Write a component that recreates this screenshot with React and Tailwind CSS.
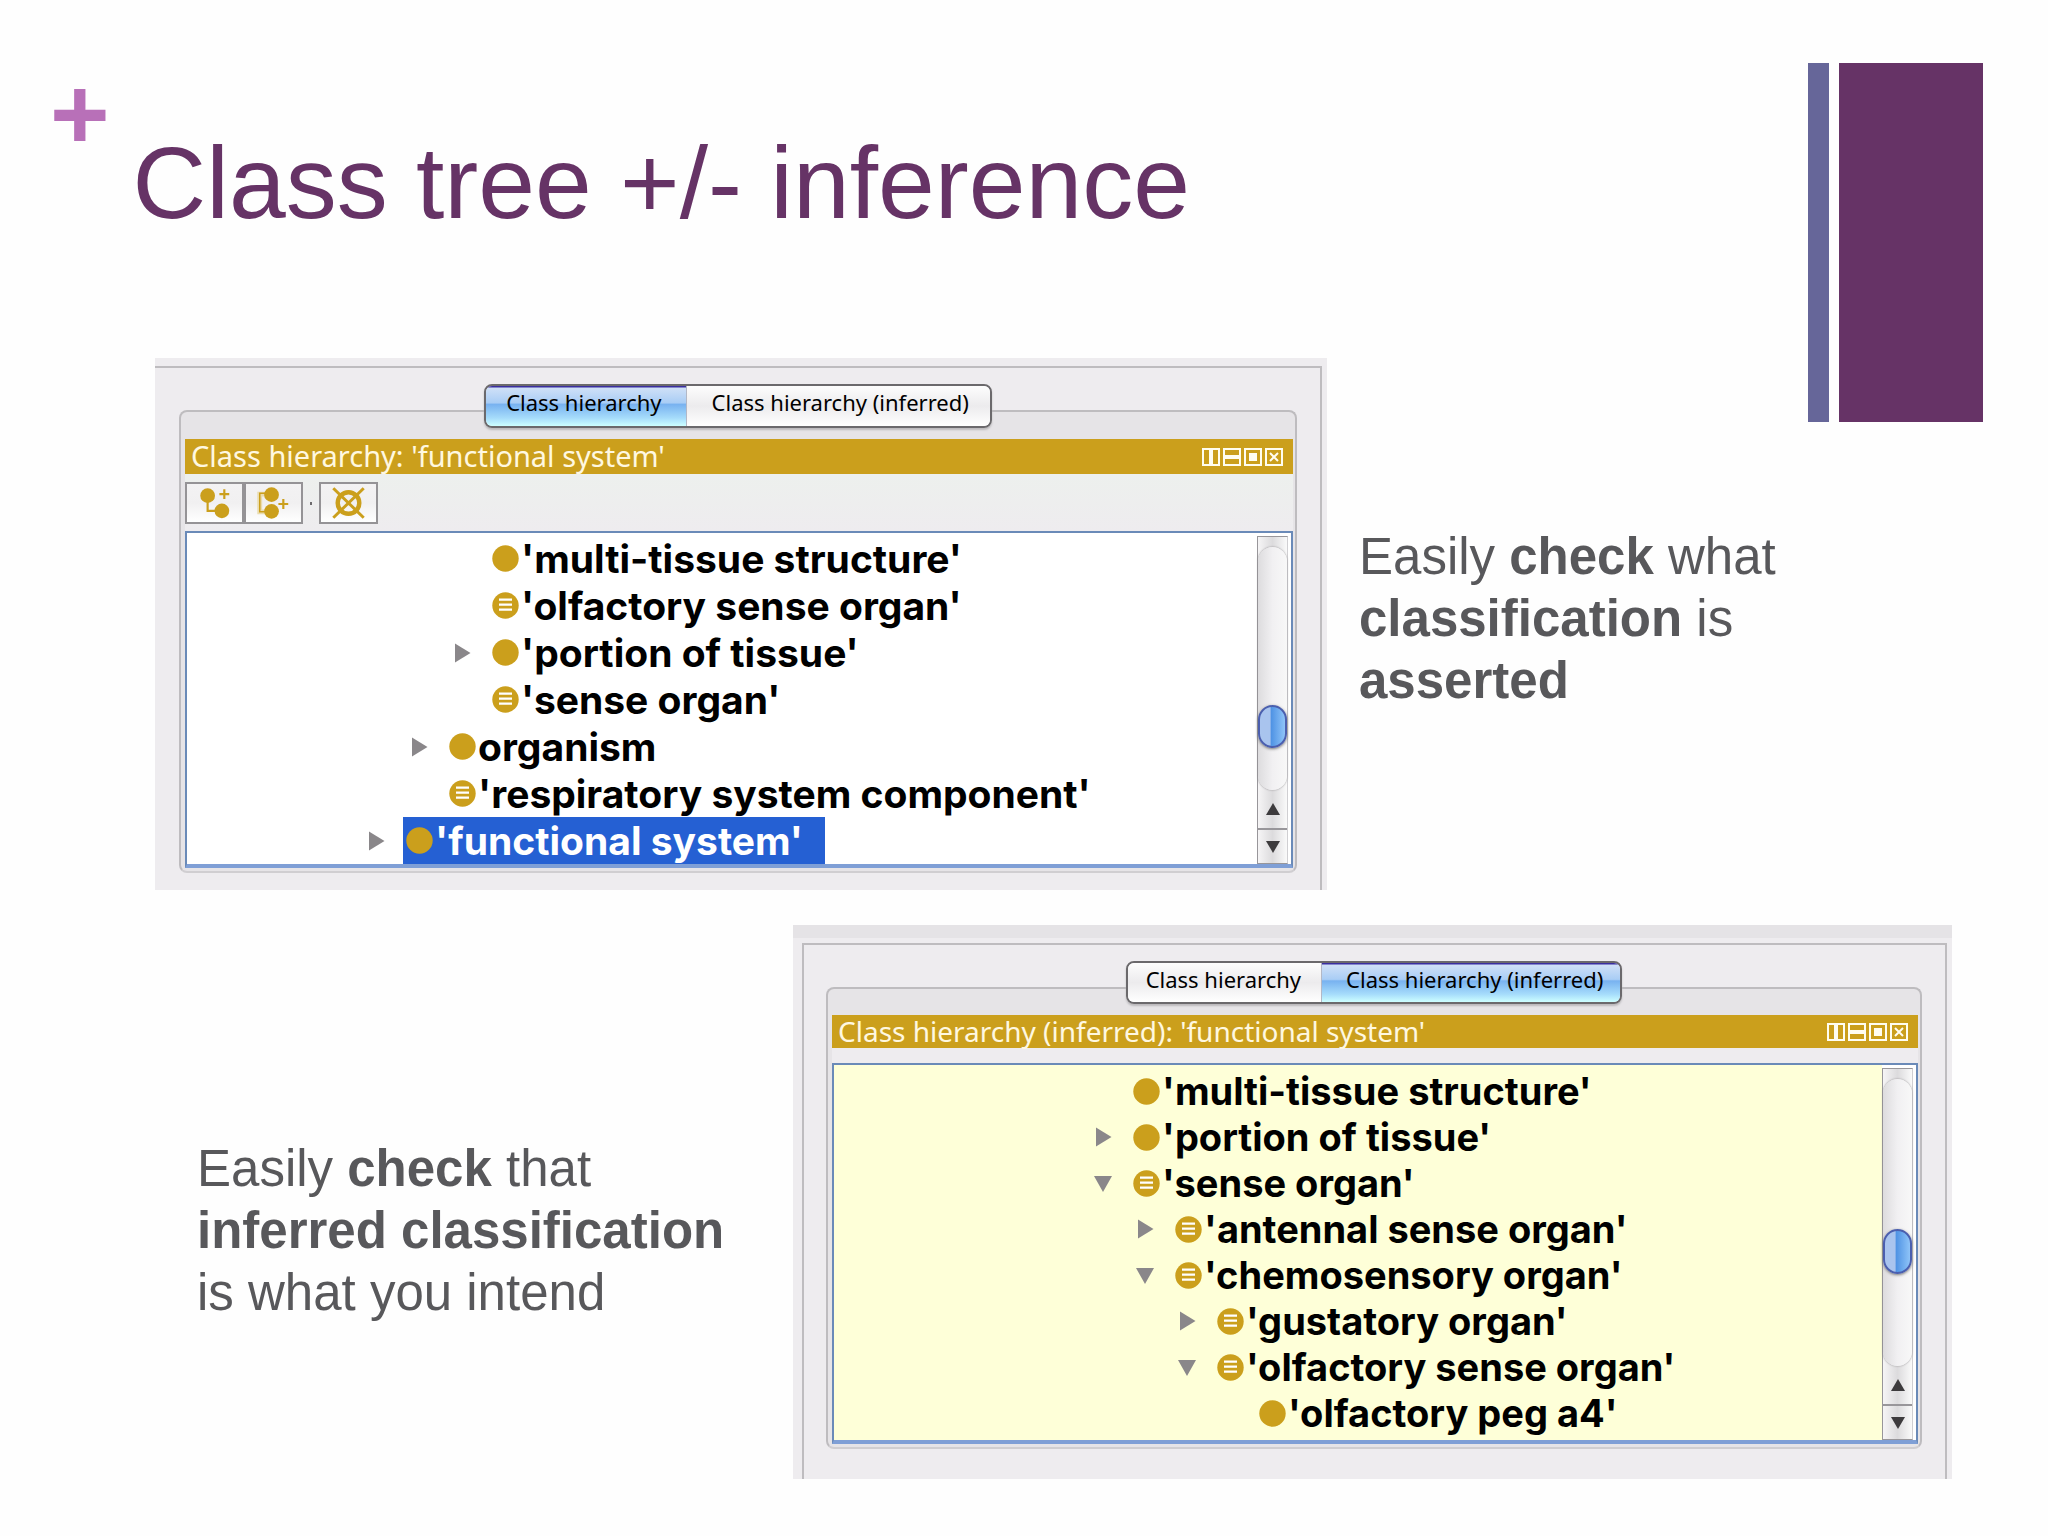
import { useState } from 'react';
import clsx from 'clsx';

const GOLD = '#cb9f1c';

const ASSERTED = [
  { name: "'multi-tissue structure'", level: 2 },
  { name: "'olfactory sense organ'", level: 2, defined: true },
  { name: "'portion of tissue'", level: 2, toggle: 'closed' },
  { name: "'sense organ'", level: 2, defined: true },
  { name: 'organism', level: 1, toggle: 'closed' },
  { name: "'respiratory system component'", level: 1, defined: true },
  { name: "'functional system'", level: 0, toggle: 'closed', selected: true },
];

const INFERRED = [
  { name: "'multi-tissue structure'", level: 0 },
  { name: "'portion of tissue'", level: 0, toggle: 'closed' },
  { name: "'sense organ'", level: 0, defined: true, toggle: 'open' },
  { name: "'antennal sense organ'", level: 1, defined: true, toggle: 'closed' },
  { name: "'chemosensory organ'", level: 1, defined: true, toggle: 'open' },
  { name: "'gustatory organ'", level: 2, defined: true, toggle: 'closed' },
  { name: "'olfactory sense organ'", level: 2, defined: true, toggle: 'open' },
  { name: "'olfactory peg a4'", level: 3 },
];

const ASSERTED_INDENT = ['pl-[179px]', 'pl-[222px]', 'pl-[265px]'];
const INFERRED_INDENT = ['pl-[259px]', 'pl-[301px]', 'pl-[343px]', 'pl-[385px]'];

function ClassIcon({ defined }) {
  return (
    <svg className="w-[27px] h-[27px] shrink-0" viewBox="0 0 27 27" aria-hidden="true">
      <circle cx="13.5" cy="13.5" r="13.2" fill={GOLD} />
      {defined && <path d="M7 7.7h13M7 12.7h13M7 17.7h13" stroke="#fff" strokeWidth="2.2" />}
    </svg>
  );
}

function Toggle({ state }) {
  if (!state) return <span className="w-5 shrink-0" />;
  return (
    <button className="w-5 h-5 shrink-0" aria-label={state === 'open' ? 'Collapse' : 'Expand'}>
      <svg viewBox="0 0 20 20" className="w-5 h-5" fill="#8a878a">
        {state === 'open' ? <path d="M1 3h18l-9 16z" /> : <path d="M3 0.5v19L18.5 10z" />}
      </svg>
    </button>
  );
}

function TreeRow({ item, indent, compact }) {
  return (
    <li
      className={clsx(
        "flex items-center font-['Inter','Noto_Sans',sans-serif]",
        compact ? 'h-[46px] text-[38px]' : 'h-[47px] text-[39px]',
        indent,
      )}
    >
      <Toggle state={item.toggle} />
      <span
        className={clsx(
          'flex items-center gap-[2px] h-full ml-[17px] pl-[3px] pr-[22px] leading-none whitespace-nowrap font-bold',
          item.selected ? 'bg-[#2560d3] text-white' : 'text-black',
        )}
      >
        <ClassIcon defined={item.defined} />
        {item.name}
      </span>
    </li>
  );
}

function ScrollBar({ before, after }) {
  return (
    <div className="w-[31px] shrink-0 flex flex-col border border-[#98969a] border-r-[#d0cfd2] bg-linear-to-r from-[#f6f5f6] via-[#dcdbdd] to-[#fafafa]">
      <div className="flex-1 flex flex-col mt-[10px] rounded-full shadow-[0_0_2px_#8b898c] bg-linear-to-r from-[#dddcde] via-[#f1f0f2] to-[#f8f8f8]">
        <div className={before} />
        <div className="flex-1 rounded-full border-2 border-[#4b5fae] shadow-[0_1px_3px_#777] bg-linear-to-r from-[#a9c4ee] from-40% via-[#4f93e4] via-45% to-[#8fc4f8]" />
        <div className={after} />
      </div>
      <button className="h-[38px] flex items-center justify-center" aria-label="Scroll up">
        <svg className="w-[14px] h-3" viewBox="0 0 14 12" fill="#3d3b3d"><path d="M7 0l7 12H0z" /></svg>
      </button>
      <button className="h-[35px] flex items-center justify-center border-t-2 border-[#98969a]" aria-label="Scroll down">
        <svg className="w-[14px] h-3" viewBox="0 0 14 12" fill="#3d3b3d"><path d="M0 0h14L7 12z" /></svg>
      </button>
    </div>
  );
}

function WindowControls() {
  const icons = [
    { label: 'Split vertically', d: 'M9 1v16', w: 4 },
    { label: 'Split horizontally', d: 'M1 9h16', w: 4 },
    { label: 'Float', d: 'M5 9h8', w: 8 },
    { label: 'Close', d: 'M5 5l8 8M13 5l-8 8', w: 2 },
  ];
  return (
    <div className="flex gap-[3px] mr-[10px]">
      {icons.map((icon) => (
        <button key={icon.label} className="w-[18px] h-[18px]" aria-label={icon.label}>
          <svg viewBox="0 0 18 18" className="w-[18px] h-[18px]" fill="none" stroke="#fffdf0">
            <rect x="1" y="1" width="16" height="16" strokeWidth="2" />
            <path d={icon.d} strokeWidth={icon.w} />
          </svg>
        </button>
      ))}
    </div>
  );
}

function ToolButton({ label, children }) {
  return (
    <button
      aria-label={label}
      className="w-[59px] h-[42px] border-2 border-[#959396] bg-linear-to-b from-[#f3f2f3] via-[#f1f0f1] to-white"
    >
      <svg viewBox="0 0 56 38" className="w-full h-full" fill="none" stroke={GOLD}>
        {children}
      </svg>
    </button>
  );
}

function Toolbar() {
  return (
    <div className="flex items-center h-[57px] pt-[1px] bg-linear-to-b from-[#edf0ed] to-[#eeecef]">
      <ToolButton label="Add subclass">
        <circle cx="21" cy="11.5" r="7.5" fill={GOLD} stroke="none" />
        <circle cx="35.5" cy="27" r="7.5" fill={GOLD} stroke="none" />
        <path d="M21 15v12h10" strokeWidth="2.2" />
        <path d="M38 5v10M33 10h10" strokeWidth="2.2" />
      </ToolButton>
      <ToolButton label="Add sibling class">
        <path d="M22 10h-8v18h8" strokeWidth="5" stroke="#eadcae" />
        <path d="M22 9h-8v19h8" strokeWidth="1.5" />
        <circle cx="26" cy="10.5" r="7.5" fill={GOLD} stroke="none" />
        <circle cx="26" cy="27.5" r="7.5" fill={GOLD} stroke="none" />
        <path d="M38 15v10M33 20h10" strokeWidth="2.2" />
      </ToolButton>
      <span className="w-[2px] h-[3px] mx-[7px] bg-[#6d6b6e]" />
      <ToolButton label="Delete class">
        <circle cx="28" cy="19" r="11" strokeWidth="4.5" />
        <path d="M12.5 4l31 30M43.5 4l-31 30" strokeWidth="3" />
      </ToolButton>
    </div>
  );
}

function Tabs({ selected, onSelect, compact }) {
  const tabs = ['Class hierarchy', 'Class hierarchy (inferred)'];
  return (
    <div
      role="tablist"
      className={clsx(
        'relative z-10 flex mx-auto w-fit rounded-lg border-2 border-[#6b696c] overflow-hidden shadow-[0_2px_2px_#bbb9bc] text-[22px]',
        compact ? 'h-[43px]' : 'h-[44px]',
      )}
    >
      {tabs.map((tab, i) => (
        <button
          key={tab}
          role="tab"
          aria-selected={i === selected}
          onClick={() => onSelect(i)}
          className={clsx(
            'pb-[7px] text-black whitespace-nowrap',
            compact
              ? ['pl-[18px] pr-[20px]', 'pl-[24px] pr-[17px] border-l border-[#b3b8c6]'][i]
              : ['pl-[20px] pr-[24px]', 'pl-[25px] pr-[21px] border-l border-[#b3b8c6]'][i],
            i === selected
              ? 'bg-[linear-gradient(to_bottom,#3a2ea0_1px,#cfe0f7_2px,#a9cdf5_42%,#78b2f0_46%,#a6dcfb_80%,#cdffff)]'
              : 'bg-linear-to-b from-[#fdfdfd] via-[#ecebed] to-white',
          )}
        >
          {tab}
        </button>
      ))}
    </div>
  );
}

function HierarchyPanel({ title, items, indents, inferred, children }) {
  const [tab, setTab] = useState(inferred ? 1 : 0);

  return (
    <section
      className={clsx(
        "bg-[#eeecef] font-['Noto_Sans','Open_Sans',sans-serif]",
        inferred ? 'border-t-[13px] border-[#e5e3e6] pt-[5px] pl-[9px] pr-[5px]' : 'pt-[8px] pr-[5px]',
      )}
    >
      <div
        className={clsx(
          'border-t-2 border-r-2 border-[#bebcbf]',
          inferred ? 'border-l-2 pt-4 pb-[30px] pl-[22px] pr-[23px]' : 'pt-4 pb-[17px] pl-[24px] pr-[23px]',
        )}
      >
        <Tabs selected={tab} onSelect={setTab} compact={inferred} />
        <div
          className={clsx(
            'rounded-lg border-2 border-[#bebcbf] border-b-[#d0ced1] bg-[#e6e4e7] pl-1 pr-[2px] pb-[3px]',
            inferred ? '-mt-[17px] pt-[26px]' : '-mt-[18px] pt-[27px]',
          )}
        >
          <div
            className={clsx(
              'flex items-center justify-between pl-[6px] text-[#fff8e0] bg-[#cb9f1c]',
              inferred ? 'h-[33px] text-[28px]' : 'h-[35px] text-[29px]',
            )}
          >
            <h2 className="pb-[2px] leading-none whitespace-nowrap">{title}</h2>
            <WindowControls />
          </div>
          {children}
          <div
            className={clsx(
              'flex border-2 border-b-4 border-[#6a8ab8] border-b-[#7f9fd6]',
              inferred ? 'bg-[#feffd8]' : 'bg-white',
            )}
          >
            <ul className={clsx('flex-1 min-w-0', inferred ? 'pt-[3px] pb-[4px]' : 'pt-[2px]')}>
              {items.map((item) => (
                <TreeRow key={item.name} item={item} indent={indents[item.level]} compact={inferred} />
              ))}
            </ul>
            <div className="flex pt-[3px] pr-[3px] bg-white">
              {inferred ? (
                <ScrollBar before="h-[150px]" after="h-[92px]" />
              ) : (
                <ScrollBar before="h-[158px]" after="h-[42px]" />
              )}
            </div>
          </div>
        </div>
      </div>
    </section>
  );
}

export default function App() {
  return (
    <main className="min-h-screen bg-[#fefefe] font-['Liberation_Sans',Arial,sans-serif] text-[#58585b]">
      <div className="grid grid-cols-[1327fr_721fr]">
        <div>
          <header className="flex h-[358px] pl-[50px]">
            <span className="pt-[63px] text-[102px] leading-[102px] font-bold text-[#b870b8]">+</span>
            <h1 className="pt-[125px] pl-[23px] text-[102px] leading-[117px] text-[#663366] whitespace-nowrap">
              Class tree +/- inference
            </h1>
          </header>
          <div className="pl-[155px]">
            <HierarchyPanel
              title="Class hierarchy: 'functional system'"
              items={ASSERTED}
              indents={ASSERTED_INDENT}
            >
              <Toolbar />
            </HierarchyPanel>
          </div>
        </div>

        <div className="pt-[63px]">
          <div className="flex justify-end gap-[10px] h-[359px] pr-[65px]">
            <div className="w-[21px] bg-[#666699]" />
            <div className="w-[144px] bg-[#663366]" />
          </div>
          <p className="pt-[104px] pl-8 text-[51px] leading-[62px]">
            Easily <b>check</b> what
            <br />
            <b>classification</b> is
            <br />
            <b>asserted</b>
          </p>
        </div>
      </div>

      <div className="grid grid-cols-[793fr_1255fr] mt-[35px]">
        <p className="pt-[213px] pl-[197px] text-[51px] leading-[62px] whitespace-nowrap">
          Easily <b>check</b> that
          <br />
          <b>inferred classification</b>
          <br />
          is what you intend
        </p>
        <div className="pr-[96px]">
          <HierarchyPanel
            inferred
            title="Class hierarchy (inferred): 'functional system'"
            items={INFERRED}
            indents={INFERRED_INDENT}
          >
            <div className="h-[15px] bg-[#eeecef]" />
          </HierarchyPanel>
        </div>
      </div>
    </main>
  );
}
